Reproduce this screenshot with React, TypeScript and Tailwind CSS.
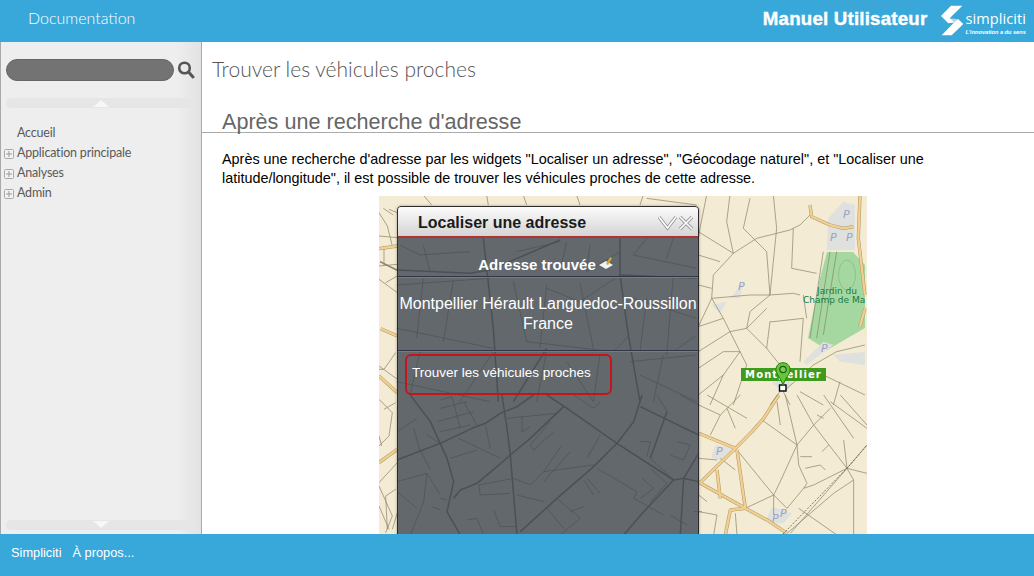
type Layer = { tx: number; ty: number; thin: string[]; major?: string[]; orange?: string[]; gray?: string[] };

const layers: Layer[] = [
  {
    tx: 397, ty: 395,
    major: ["M0 195L130 145L225 100L265 85L310 55L360 35L410 0","M40 0L100 80L150 190L170 260L150 350L190 420","M315 0L330 100L340 180L360 420","M500 35L400 130L340 180L300 215L240 265L190 285L170 310","M450 0L510 40L660 145L830 255L860 250L905 260","M735 0L710 80L660 145L590 215L480 310L370 410","M810 50L760 190","M730 35L905 120","M860 250L850 420","M905 175L860 250","M830 255L740 350L680 420"],
    thin: ["M0 110L60 70","M90 120L130 145","M50 100L70 170","M130 15L165 5L190 100","M120 80L230 50","M130 40L210 20","M130 110L220 90","M200 20L240 90","M185 130L310 190","M265 90L280 160","M330 70L480 55","M375 65L375 110L400 95","M470 110L410 165L400 150L460 80","M495 150L440 230L590 210","M520 170L440 260","M440 230L400 270L350 250L245 270L250 300L340 295","M360 300L440 320","M610 120L570 190","M600 220L720 290","M570 250L610 295","M560 255L590 300","M480 310L550 370L490 420","M450 340L500 400","M520 350L560 335","M720 290L710 310L800 360","M760 190L830 255","M730 140L760 140L750 185","M840 140L880 150L860 195","M820 180L860 195","M735 250L770 280L730 310","M760 220L810 265L760 320","M0 260L90 235L130 300","M90 235L80 320L40 420","M70 165L100 225","M160 190L240 165","M290 345L310 395L360 395","M210 375L240 370L260 420","M0 290L60 340","M130 310L150 315","M105 335L130 345","M820 360L870 390","M890 350L915 350","M530 0L590 40","M590 40L610 20","M780 0L810 50","M850 0L905 30"],
  },
  {
    tx: 697, ty: 395,
    orange: ["M5 115L115 160L165 110L200 70L245 0","M115 160L10 262L5 262","M120 165L145 340","M5 262L145 340L210 375L270 415","M60 225L70 310","M145 340L100 345L85 420"],
    gray: ["M45 175L55 150L105 160L70 195L45 190Z","M210 370L225 335L285 355L260 385L225 385Z"],
    thin: ["M5 30L70 60L130 0","M30 0L150 70","M70 60L40 120","M90 40L115 100","M195 75L300 150","M240 20L250 90","M265 0L300 150L245 270L230 300","M300 150L350 90L300 0","M350 90L450 220L470 255","M380 0L470 130","M430 0L510 90","M350 90L400 40","M360 60L380 70","M400 20L510 100","M375 170L395 150","M300 150L305 210L330 265","M310 185L345 185","M325 220L370 210L385 225","M120 165L230 300","M145 340L230 300L230 360","M230 300L270 340L320 280L350 270L450 220","M320 280L330 265","M270 415L410 295L470 255L470 420","M305 340L420 420","M440 135L450 220L510 235","M510 150L450 220L280 415","M5 350L60 360L50 420","M115 355L120 420","M30 320L5 300","M70 190L115 225","M5 190L60 195"],
  },
  {
    tx: 379, ty: 196,
    orange: ["M0 158L55 150","M5 398L55 420","M0 540L55 590","M0 800L55 760"],
    thin: ["M0 50L25 90L40 150","M0 120L55 125","M15 150L15 210","M0 210L55 205","M30 40L55 50","M0 250L55 290","M55 240L20 260","M50 470L15 520L0 520","M0 510L55 550","M50 620L15 640","M0 610L40 650L30 720L0 750","M0 720L8 750","M55 800L0 860","M0 870L40 960L20 1010","M50 880L20 900L25 1000","M55 950L40 1000","M0 930L30 1000"],
  },
  {
    tx: 380, ty: 195,
    major: ["M0 200L50 225L270 235L330 225","M310 130L340 400L355 620","M720 130L720 240L745 420L780 620","M950 250L720 240","M500 460L400 620","M330 225L540 135"],
    thin: ["M10 40L40 60","M130 0L155 30","M320 0L325 30","M430 0L440 30","M590 0L600 30","M790 0L780 30","M800 10L950 30","M60 150L120 180L270 170","M130 150L150 230","M410 170L540 140","M540 230L560 140","M630 150L620 230L720 170","M800 130L760 180L950 220","M880 130L860 190","M50 270L330 250","M130 250L110 430","M220 255L190 440","M50 400L340 460","M400 260L440 440","M440 440L700 470L750 420","M500 270L480 460","M600 265L640 460","M720 240L600 320L500 280","M760 310L950 370","M800 310L780 470","M880 240L860 480","M50 560L330 620","M120 470L90 600","M500 470L470 620","M660 480L640 620","M750 500L950 480","M850 480L820 620","M560 500L640 620","M780 540L950 620","M340 470L240 620","M950 420L880 470"],
  },
  {
    tx: 690, ty: 195,
    orange: ["M510 0L505 130L525 300","M360 30L365 65L420 90L460 100L490 95","M525 340L510 395"],
    gray: ["M415 70L460 20L495 30L495 165L410 165Z","M120 310L160 260L150 310Z","M65 330L110 320L90 355Z","M340 500L400 440L430 450L350 510Z","M430 480L525 470L525 510L450 500Z","M245 565L270 545L310 565L280 590Z"],
    thin: ["M50 0L30 100L25 130","M25 110L130 175L70 240L65 310L25 395","M130 175L200 130L300 105L330 90","M120 0L110 80L130 175","M180 10L160 100L230 170L240 300L310 295L330 300","M250 0L260 100L255 150L240 300","M65 310L180 300L240 300","M310 100L305 220L380 235","M330 90L360 60","M65 310L100 370L150 470L170 510","M240 300L180 350L170 400L230 460L270 510","M170 400L120 410L25 470","M25 395L100 370","M250 380L340 370L330 500","M340 300L350 370","M25 520L100 470L150 470","M230 460L240 380L250 380","M525 450L440 470L370 510L280 590","M400 170L360 430","M420 170L380 430","M440 170L400 420","M25 180L90 200","M25 270L65 280","M150 470L100 540L60 630","M170 510L130 630","M270 590L240 630","M280 590L300 630","M330 590L400 630","M400 540L525 600","M450 560L430 630","M100 540L25 600","M170 400L230 340"],
  },
];

const parking: [number, number][] = [[843, 218], [830, 241], [846, 241], [738, 290], [821, 352], [716, 455], [772, 522], [780, 517]];

function RoadMap() {
  return (
    <svg className="block" width="488" height="338" viewBox="379 196 488 338">
      <rect x="379" y="196" width="488" height="338" fill="#f3ebd4" />
      <path d="M827 252L853 252L865 265L865 328L827 350L808 338L820 278Z" fill="#a5d8a0" />
      <ellipse cx="847" cy="275" rx="8.5" ry="15" fill="none" stroke="#86b486" strokeWidth="0.7" />
      {layers.map((l) => (
        <g key={`${l.tx}-${l.ty}`} transform={`translate(${l.tx} ${l.ty}) scale(0.3333)`} fill="none" strokeLinejoin="round">
          {l.gray?.map((d) => <path key={d} d={d} fill="#dfe1de" />)}
          {l.thin.map((d) => <path key={d} d={d} stroke="#8f8868" strokeWidth="2.2" />)}
          {l.major?.map((d) => <path key={d} d={d} stroke="#8c8268" strokeWidth="4.6" />)}
          {l.orange?.map((d) => <path key={d} d={d} stroke="#a89a70" strokeWidth="10" />)}
          {l.orange?.map((d) => <path key={`f${d}`} d={d} stroke="#f4cf8e" strokeWidth="7" />)}
        </g>
      ))}
      <path d="M783 534L850 465L867 445" fill="none" stroke="#444" strokeWidth="0.7" strokeDasharray="2 1.5" />
      {parking.map(([x, y]) => <text key={`${x}-${y}`} x={x} y={y} fontSize="11" fontStyle="italic" fill="#9aa3c0" fontFamily="'DejaVu Sans', sans-serif">P</text>)}
      <g fill="#167a48" fontSize="9" fontFamily="'DejaVu Sans', sans-serif">
        <text x="817" y="294">Jardin du</text>
        <text x="803" y="303">Champ de Ma</text>
      </g>
    </svg>
  );
}

function Pin() {
  return (
    <svg className="absolute left-[396px] top-[166px]" width="16" height="30" viewBox="0 0 16 30">
      <rect x="4.5" y="23" width="6.5" height="6" fill="#fff" stroke="#000" strokeWidth="1.4" />
      <path d="M8 0.7C3.8 0.7 1 3.8 1 7.5C1 12.5 6 16 8 23.5C10 16 15 12.5 15 7.5C15 3.8 12.2 0.7 8 0.7Z" fill="#62c934" stroke="#237a12" />
      <circle cx="8" cy="7.5" r="3.2" fill="#7fc864" stroke="#1e5d10" strokeWidth="1.2" />
    </svg>
  );
}

function Logo() {
  return (
    <svg width="25" height="32" viewBox="15 15 75 96" className="block shrink-0">
      <path d="M48 17H82L44 55L64 67L40 70L18 48Z" fill="#fff" />
      <path d="M44 55L72 58L62 70Z" fill="#c4cdd2" />
      <path d="M70 58L85 72L50 106H20L55 70Z" fill="#fff" />
    </svg>
  );
}

function PanelIcons() {
  return (
    <svg width="38" height="16" viewBox="0 0 38 16" className="block">
      <path d="M2 2L10.5 13L19 2" fill="none" stroke="#9a9a9a" strokeWidth="3.4" />
      <path d="M2 2L10.5 13L19 2" fill="none" stroke="#fff" strokeWidth="1.6" />
      <path d="M23 2L35 14M35 2L23 14" fill="none" stroke="#9a9a9a" strokeWidth="3.4" />
      <path d="M23 2L35 14M35 2L23 14" fill="none" stroke="#fff" strokeWidth="1.6" />
    </svg>
  );
}

function TreeRow({ label, expand }: { label: string; expand?: boolean }) {
  return (
    <div className="flex h-5 items-center">
      <span className="flex w-[16px] justify-start pl-[3px]">
        {expand && (
          <svg width="10" height="10" viewBox="0 0 10 10" className="mt-[2px]">
            <rect x="0.5" y="0.5" width="9" height="9" rx="1" fill="#f2f2f2" stroke="#a8a8a8" />
            <path d="M2 5H8M5 2V8" stroke="#999" />
          </svg>
        )}
      </span>
      <span className="text-[12.5px] tracking-[-0.2px] text-[#5a5a5a]">{label}</span>
    </div>
  );
}

export default function App() {
  return (
    <div className="flex h-[576px] w-[1034px] flex-col overflow-hidden bg-white font-['Liberation_Sans',sans-serif]">
      <header className="relative flex h-[42px] shrink-0 items-center bg-[#38a8db] pl-[28px] pr-[8px] text-white">
        <span className="-mt-[6px] font-['Lato',sans-serif] text-[16px] font-light">Documentation</span>
        <span className="absolute left-[820px] top-0 text-[10px] leading-[10px] tracking-[0.6px] text-[#45a4d2]">contenu menu outils</span>
        <div className="ml-auto flex items-center gap-[13px]">
          <span className="-mt-[5px] text-[18.7px] font-bold leading-[22px] tracking-[0.2px] [-webkit-text-stroke:0.4px_white]">Manuel Utilisateur</span>
          <div className="flex items-center">
            <Logo />
            <div className="ml-[0px] flex flex-col pt-[4px]">
              <span className="font-['Open_Sans',sans-serif] text-[14.5px] font-normal leading-[18px] tracking-[0.1px]">simpliciti</span>
              <span className="text-[5.6px] font-bold italic leading-[8px]">L'innovation a du sens</span>
            </div>
          </div>
        </div>
      </header>

      <main className="flex min-h-0 flex-1">
        <aside className="flex w-[202px] shrink-0 flex-col border-x border-[#a9a9a9] bg-[linear-gradient(90deg,#eeeeee_88%,#e2e2e2_100%)] pl-[5px] pr-[5px] font-['Lato',sans-serif]">
          <div className="mt-[17px] flex items-center">
            <div className="h-[22px] w-[168px] rounded-[11px] border border-[#666] bg-[#737373]" />
            <svg width="18" height="20" viewBox="0 0 18 20" className="ml-[3px]">
              <circle cx="7.5" cy="8" r="5.3" fill="none" stroke="#555" strokeWidth="2.6" />
              <path d="M11.5 12L16 17" stroke="#555" strokeWidth="3" strokeLinecap="round" />
            </svg>
          </div>
          <div className="relative mt-[17px] h-[10px] w-[190px] rounded-[5px] bg-[#e6e6e6]">
            <div className="absolute left-[87px] top-[2px] h-0 w-0 border-x-[8px] border-b-[7px] border-x-transparent border-b-[#f7f7f7]" />
          </div>
          <nav className="-ml-[5px] mt-[15px]">
            <TreeRow label="Accueil" />
            <TreeRow label="Application principale" expand />
            <TreeRow label="Analyses" expand />
            <TreeRow label="Admin" expand />
          </nav>
          <div className="relative mb-[4px] mt-auto h-[10px] w-[190px] rounded-[5px] bg-[#e6e6e6]">
            <div className="absolute left-[87px] top-[1px] h-0 w-0 border-x-[8px] border-t-[7px] border-x-transparent border-t-[#f7f7f7]" />
          </div>
        </aside>

        <article className="min-w-0 flex-1 overflow-hidden">
          <h1 className="ml-[10px] mt-[13px] font-['Lato',sans-serif] text-[21px] font-light leading-[28px] text-[#555]">Trouver les véhicules proches</h1>
          <h2 className="flex h-[50px] items-end border-b border-[#aaa] pl-[20px] text-[21.6px] leading-[20px] text-[#666]">Après une recherche d'adresse</h2>
          <p className="mt-[17px] pl-[20px] pr-[16px] text-[14.4px] leading-[19px] text-black">
            Après une recherche d'adresse par les widgets "Localiser un adresse", "Géocodage naturel", et "Localiser une latitude/longitude", il est possible de trouver les véhicules proches de cette adresse.
          </p>
          <div className="relative ml-[177px] mt-[8px] h-[338px] w-[488px] overflow-hidden">
            <RoadMap />
            <div className="absolute left-[362px] top-[172px] flex h-[13px] w-[85px] items-center justify-center bg-[#3e9b1d] font-['DejaVu_Sans',sans-serif] text-[10px] font-bold tracking-[1.1px] text-white">Montpellier</div>
            <Pin />
            <section className="absolute left-[18px] top-[10px] h-[340px] w-[302px] rounded-t-[4px] border border-[#2b2b2b] bg-[#3a4350]/[0.78] text-white shadow-[0_0_3px_rgba(0,0,0,0.35)]">
              <div className="flex h-[31px] items-center justify-between rounded-t-[3px] border-b-2 border-[#b23232] bg-[linear-gradient(180deg,#fbfbfb,#d4d4d4)] pl-[20px] pr-[3px] pt-[2px]">
                <span className="text-[16px] font-bold text-[#1a1a1a]">Localiser une adresse</span>
                <PanelIcons />
              </div>
              <div className="flex h-[39px] items-center justify-center gap-[2px] border-b border-[#2f3646] pr-[4px] pt-[16px] shadow-[0_1px_0_#787c82]">
                <span className="text-[15px] font-bold">Adresse trouvée</span>
                <svg width="16" height="16" viewBox="0 0 16 16" className="-mt-[5px]">
                  <path d="M1 10L8 6L15 10L8 14Z" fill="#f2f2f2" />
                  <path d="M8 9L12 2L14 3L10 10Z" fill="#d9a532" />
                </svg>
              </div>
              <div className="flex h-[74px] items-center justify-center border-b border-[#2f3646] text-center text-[16px] leading-[20px] shadow-[0_1px_0_#787c82]">
                Montpellier Hérault Languedoc-Roussillon<br />France
              </div>
              <div className="ml-[7px] mt-[3px] flex h-[41px] w-[207px] items-center rounded-[6px] border-2 border-[#c4141c] pb-[3px] pl-[5px] text-[13.5px]">
                Trouver les véhicules proches
              </div>
            </section>
          </div>
        </article>
      </main>

      <footer className="flex h-[42px] shrink-0 items-center gap-[11px] bg-[#38a8db] pb-[4px] pl-[11px] text-[12.8px] text-white">
        <span>Simpliciti</span>
        <span>À propos...</span>
      </footer>
    </div>
  );
}
